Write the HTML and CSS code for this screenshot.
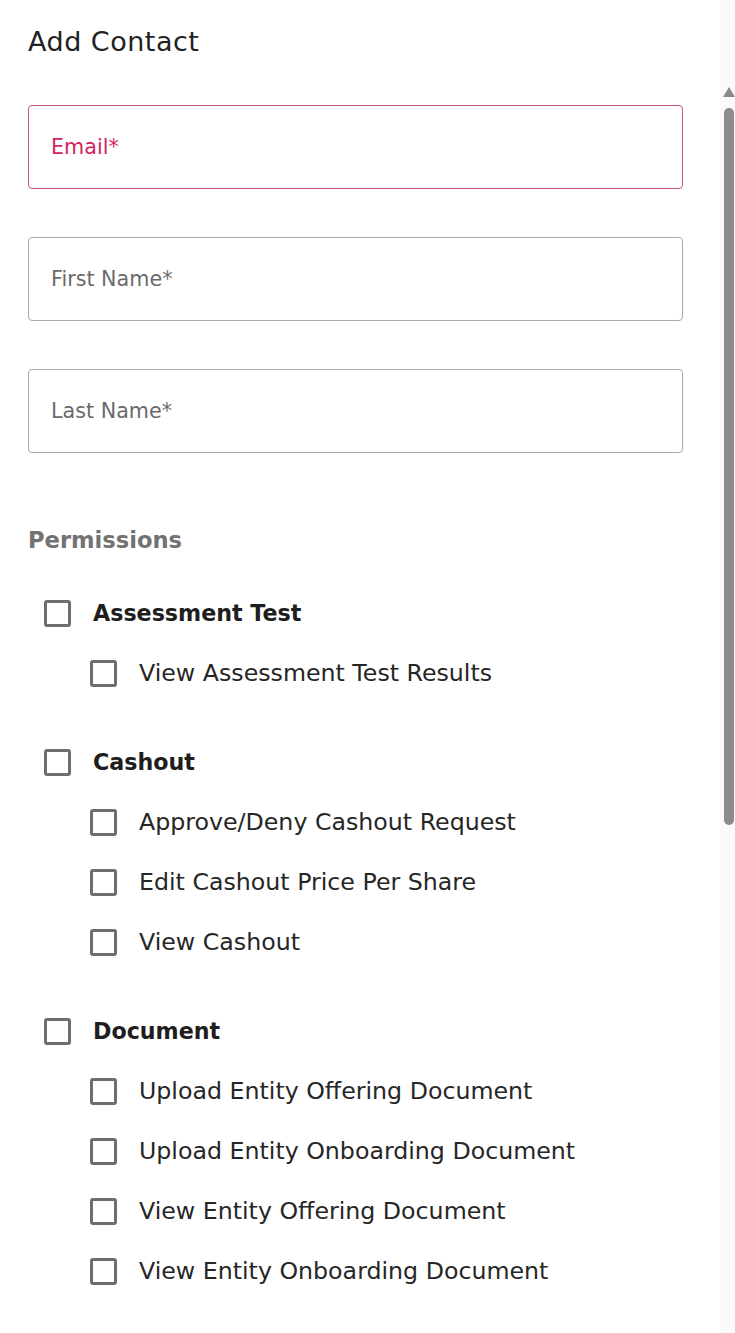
FILE: index.html
```html
<!DOCTYPE html>
<html lang="en">
<head>
<meta charset="utf-8">
<title>Add Contact</title>
<link rel="stylesheet" href="styles.css">
</head>
<body>
<div class="page">
  <main class="dialog">
    <h1 class="title">Add Contact</h1>

    <div class="field field-error"><span class="label">Email*</span></div>
    <div class="field"><span class="label">First Name*</span></div>
    <div class="field"><span class="label">Last Name*</span></div>

    <h2 class="section">Permissions</h2>

    <section class="group">
      <div class="row row-head"><span class="box"></span><span class="head-text">Assessment Test</span></div>
      <div class="row row-sub"><span class="box"></span><span class="sub-text">View Assessment Test Results</span></div>
    </section>

    <section class="group">
      <div class="row row-head"><span class="box"></span><span class="head-text">Cashout</span></div>
      <div class="row row-sub"><span class="box"></span><span class="sub-text">Approve/Deny Cashout Request</span></div>
      <div class="row row-sub"><span class="box"></span><span class="sub-text">Edit Cashout Price Per Share</span></div>
      <div class="row row-sub"><span class="box"></span><span class="sub-text">View Cashout</span></div>
    </section>

    <section class="group">
      <div class="row row-head"><span class="box"></span><span class="head-text">Document</span></div>
      <div class="row row-sub"><span class="box"></span><span class="sub-text">Upload Entity Offering Document</span></div>
      <div class="row row-sub"><span class="box"></span><span class="sub-text">Upload Entity Onboarding Document</span></div>
      <div class="row row-sub"><span class="box"></span><span class="sub-text">View Entity Offering Document</span></div>
      <div class="row row-sub"><span class="box"></span><span class="sub-text">View Entity Onboarding Document</span></div>
    </section>
  </main>

  <aside class="scrollbar">
    <span class="arrow-up"></span>
    <span class="thumb"></span>
  </aside>
</div>
</body>
</html>
```

FILE: styles.css
```css
* { box-sizing: border-box; }

html, body {
  margin: 0;
  padding: 0;
  background: #ffffff;
}

body {
  font-family: "DejaVu Sans", "Liberation Sans", sans-serif;
  color: #212121;
}

.page {
  display: flex;
  width: 735px;
  height: 1333px;
  overflow: hidden;
}

.dialog {
  flex: 0 0 720px;
  padding: 26px 37px 0 28px;
}

.title {
  margin: 0 0 47px 0;
  font-size: 27px;
  line-height: 32px;
  font-weight: 400;
  letter-spacing: 0.5px;
  color: #222222;
}

.field {
  height: 84px;
  border: 1px solid #a8a8a8;
  border-radius: 4px;
  display: flex;
  align-items: center;
  padding-left: 22px;
  margin-bottom: 48px;
}

.field .label {
  font-size: 20.7px;
  color: #6a6a6a;
}

.field-error {
  border-color: #c7557d;
}

.field-error .label {
  color: #d4245f;
}

.section {
  margin: 72px 0 28px 0;
  font-size: 22.6px;
  line-height: 30px;
  font-weight: 700;
  color: #727272;
}

.group {
  margin-bottom: 29px;
}

.row {
  height: 60px;
  display: flex;
  align-items: center;
}

.row-head {
  padding-left: 16px;
}

.row-sub {
  padding-left: 62px;
}

.box {
  flex: 0 0 27px;
  width: 27px;
  height: 27px;
  border: 3px solid #6e6e6e;
  border-radius: 3px;
  margin-right: 22px;
}

.head-text {
  font-size: 22.2px;
  font-weight: 700;
  color: #1e1e1e;
}

.sub-text {
  font-size: 23.7px;
  font-weight: 400;
  color: #262626;
}

.scrollbar {
  flex: 0 0 15px;
  background: #fafafa;
  display: flex;
  flex-direction: column;
  align-items: center;
  padding-top: 87px;
}

.arrow-up {
  width: 0;
  height: 0;
  border-left: 6px solid transparent;
  border-right: 6px solid transparent;
  border-bottom: 10px solid #8a8a8a;
  margin-left: 2px;
}

.thumb {
  width: 10px;
  height: 717px;
  margin-top: 11px;
  margin-left: 2px;
  border-radius: 5px;
  background: #8c8c8c;
}
```
